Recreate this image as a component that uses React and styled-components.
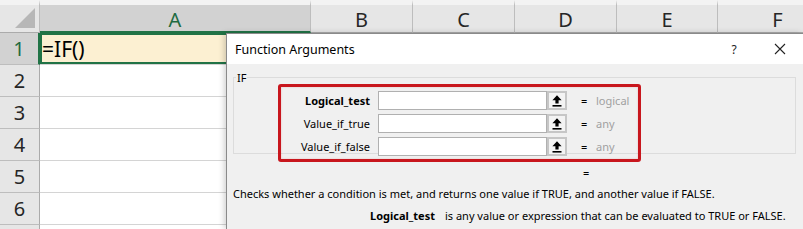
import styled, { createGlobalStyle } from "styled-components";

const GlobalStyle = createGlobalStyle`
    html, body {
        margin: 0;
        padding: 0;
        background: #FFFFFF;
    }
    #root {
        width: 803px;
        height: 229px;
        overflow: hidden;
    }
`;

const columns = ["A", "B", "C", "D", "E", "F"];
const rows = [1, 2, 3, 4, 5, 6];

const args = [
    { name: "Logical_test", type: "logical", bold: true },
    { name: "Value_if_true", type: "any" },
    { name: "Value_if_false", type: "any" },
];

function UpArrow() {
    return (
        <svg width="10" height="12" viewBox="0 0 10 12">
            <path d="M5 0.3 L9.6 5.2 L6.6 5.2 L6.6 8.6 L3.4 8.6 L3.4 5.2 L0.4 5.2 Z" fill="#000" />
            <rect x="0.5" y="10" width="9" height="1.6" fill="#000" />
        </svg>
    );
}

function App() {
    return (
        <Screen>
            <GlobalStyle />
            <Sheet>
                <Corner>
                    <Triangle />
                </Corner>
                {columns.map((c) => (
                    <ColHeader key={c} $active={c === "A"}>{c}</ColHeader>
                ))}
                {rows.map((r) => (
                    <Row key={r}>
                        <RowHeader $active={r === 1}>{r}</RowHeader>
                        {columns.map((c) => (
                            <Cell key={c} $selected={r === 1 && c === "A"}>
                                {r === 1 && c === "A" ? "=IF()" : ""}
                            </Cell>
                        ))}
                    </Row>
                ))}
                <Row>
                    <RowHeader />
                    {columns.map((c) => (
                        <Cell key={c} />
                    ))}
                </Row>
            </Sheet>

            <Dialog>
                <TitleBar>
                    <Title>Function Arguments</Title>
                    <TitleButtons>
                        <HelpMark>?</HelpMark>
                        <CloseMark>
                            <svg width="12" height="12" viewBox="0 0 12 12">
                                <path d="M1 1 L11 11 M11 1 L1 11" stroke="#222" strokeWidth="1.1" />
                            </svg>
                        </CloseMark>
                    </TitleButtons>
                </TitleBar>
                <Body>
                    <Group>
                        <Legend>IF</Legend>
                        <Highlight>
                            {args.map((a) => (
                                <ArgRow key={a.name}>
                                    <ArgLabel $bold={a.bold}>{a.name}</ArgLabel>
                                    <ArgInput />
                                    <RefButton>
                                        <UpArrow />
                                    </RefButton>
                                    <Equals>=</Equals>
                                    <ArgType>{a.type}</ArgType>
                                </ArgRow>
                            ))}
                        </Highlight>
                    </Group>
                    <Result>=</Result>
                    <Description>
                        Checks whether a condition is met, and returns one value if TRUE, and another value if FALSE.
                    </Description>
                    <ArgHelp>
                        <ArgHelpName>Logical_test</ArgHelpName>
                        <span>is any value or expression that can be evaluated to TRUE or FALSE.</span>
                    </ArgHelp>
                </Body>
            </Dialog>
        </Screen>
    );
}

export default App;

const Screen = styled.div`
    position: relative;
    width: 803px;
    height: 229px;
    overflow: hidden;
    background: #FFFFFF;
`;

const Sheet = styled.div`
    display: grid;
    grid-template-columns: 40px 271px 102px 102px 102px 101px 120px;
    grid-template-rows: 33px;
    grid-auto-rows: 32px;
    font-family: "Noto Sans", "Open Sans", sans-serif;
`;

const Corner = styled.div`
    position: relative;
    background: #E6E6E6;
    border-top: 5px solid #F3F3F3;
    border-right: 1px solid #BDBDBD;
    border-bottom: 1px solid #ABABAB;
`;

const Triangle = styled.div`
    position: absolute;
    right: 4px;
    bottom: 4px;
    width: 0;
    height: 0;
    border-left: 20px solid transparent;
    border-bottom: 20px solid #B7B7B7;
`;

const ColHeader = styled.div`
    display: flex;
    align-items: center;
    justify-content: center;
    background: ${(p) => (p.$active ? "#D2D2D2" : "#E6E6E6")};
    color: ${(p) => (p.$active ? "#1E6B41" : "#262626")};
    border-top: 5px solid #F3F3F3;
    border-right: 1px solid #BDBDBD;
    border-bottom: ${(p) => (p.$active ? "2px solid #217346" : "1px solid #ABABAB")};
    font-size: 20px;
    padding-top: 2px;
`;

const Row = styled.div`
    display: contents;
`;

const RowHeader = styled.div`
    display: flex;
    align-items: center;
    justify-content: center;
    background: ${(p) => (p.$active ? "#D2D2D2" : "#E6E6E6")};
    color: ${(p) => (p.$active ? "#1E6B41" : "#262626")};
    border-right: ${(p) => (p.$active ? "2px solid #217346" : "1px solid #ABABAB")};
    border-bottom: 1px solid #BDBDBD;
    font-size: 20px;
`;

const Cell = styled.div`
    display: flex;
    align-items: center;
    padding-left: 2px;
    background: ${(p) => (p.$selected ? "#FCF0D2" : "#FFFFFF")};
    border-right: 1px solid #D4D4D4;
    border-bottom: 1px solid #D4D4D4;
    box-shadow: ${(p) => (p.$selected ? "inset 0 0 0 2px #217346" : "none")};
    font-size: 21px;
    color: #000000;
`;

const Dialog = styled.div`
    position: absolute;
    left: 226px;
    top: 33px;
    right: 0;
    bottom: 0;
    display: flex;
    flex-direction: column;
    background: #F0F0F0;
    border-left: 1px solid #8A8A8A;
    border-top: 1px solid #8A8A8A;
    box-shadow: -2px 0 6px rgba(0, 0, 0, 0.18);
    font-family: "Noto Sans", "Open Sans", sans-serif;
    font-size: 11px;
    color: #000000;
`;

const TitleBar = styled.div`
    display: flex;
    align-items: center;
    justify-content: space-between;
    height: 30px;
    padding-left: 8px;
    background: #FFFFFF;
`;

const Title = styled.div`
    font-size: 12.5px;
    color: #000000;
`;

const TitleButtons = styled.div`
    display: flex;
    align-items: center;
`;

const HelpMark = styled.div`
    width: 46px;
    text-align: center;
    font-size: 12px;
    color: #222222;
`;

const CloseMark = styled.div`
    display: flex;
    justify-content: center;
    width: 46px;
`;

const Body = styled.div`
    display: flex;
    flex-direction: column;
    padding: 6px 7px 0 6px;
`;

const Group = styled.fieldset`
    margin: 0;
    padding: 0;
    height: 84px;
    border: 1px solid #DCDCDC;
    box-sizing: border-box;
`;

const Legend = styled.legend`
    padding: 0 1px;
    margin-left: 2px;
    font-size: 11px;
    color: #000000;
`;

const Highlight = styled.div`
    display: flex;
    flex-direction: column;
    gap: 4px;
    width: 363px;
    box-sizing: border-box;
    margin: -1px 0 0 44px;
    padding: 4px 0 3px 0;
    border: 3px solid #C8161D;
    border-radius: 3px;
    box-shadow: inset 0 0 2px rgba(200, 22, 29, 0.25);
`;

const ArgRow = styled.div`
    display: flex;
    align-items: center;
    height: 19px;
`;

const ArgLabel = styled.div`
    width: 89px;
    text-align: right;
    padding-right: 8px;
    font-weight: ${(p) => (p.$bold ? 700 : 400)};
    white-space: nowrap;
`;

const ArgInput = styled.div`
    width: 169px;
    height: 19px;
    box-sizing: border-box;
    background: #FFFFFF;
    border: 1px solid #B0B0B0;
`;

const RefButton = styled.div`
    display: flex;
    align-items: center;
    justify-content: center;
    width: 20px;
    height: 19px;
    box-sizing: border-box;
    background: #F3F3F3;
    border: 2px solid #C6C6C6;
`;

const Equals = styled.div`
    width: 12px;
    margin-left: 14px;
    color: #000000;
`;

const ArgType = styled.div`
    color: #A0A0A0;
    padding-left: 3px;
`;

const Result = styled.div`
    margin-top: 12px;
    padding-left: 350px;
    line-height: 14px;
`;

const Description = styled.div`
    margin-top: 7px;
    line-height: 14px;
    white-space: nowrap;
`;

const ArgHelp = styled.div`
    display: flex;
    gap: 10px;
    margin-top: 8px;
    padding-left: 137px;
    line-height: 14px;
    white-space: nowrap;
`;

const ArgHelpName = styled.span`
    font-weight: 700;
`;
